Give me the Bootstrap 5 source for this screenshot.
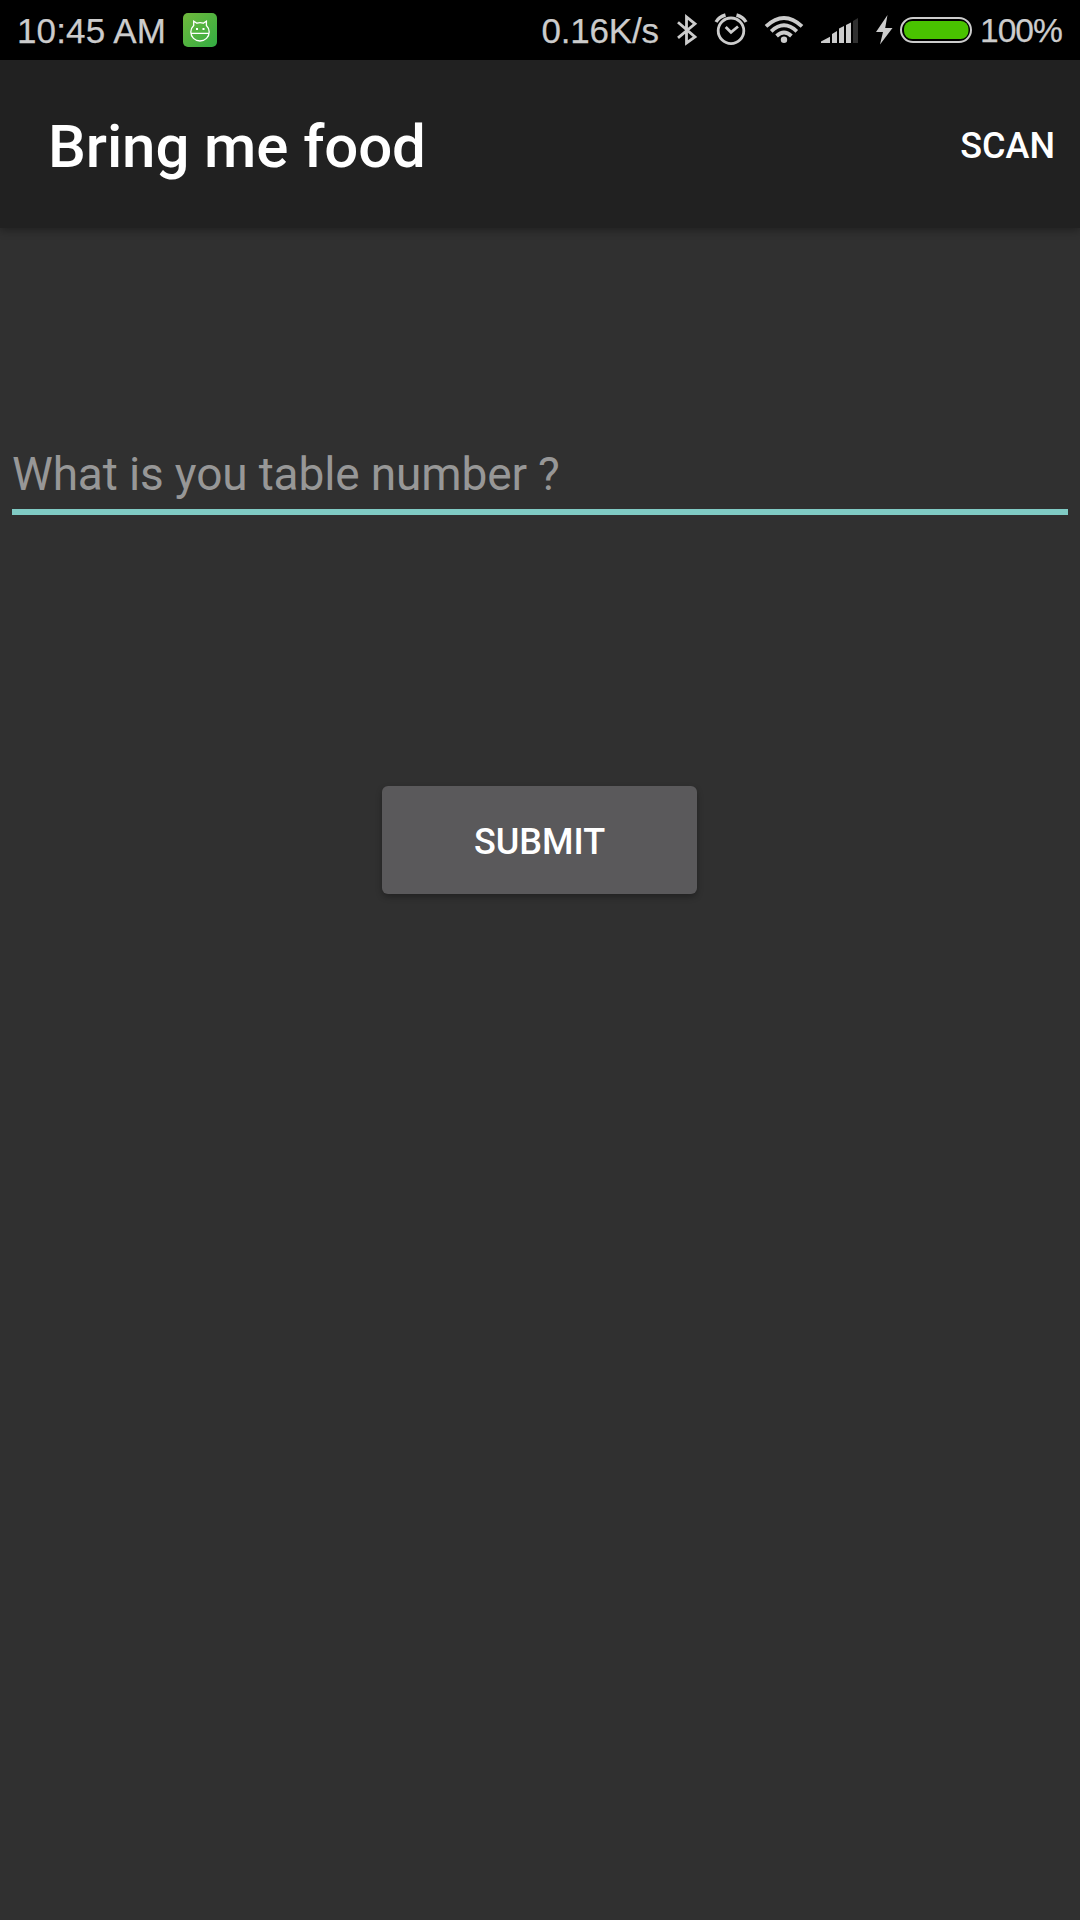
<!DOCTYPE html>
<html lang="en">
<head>
<meta charset="utf-8">
<meta name="viewport" content="width=device-width, initial-scale=1">
<title>Bring me food</title>
<link href="https://cdn.jsdelivr.net/npm/bootstrap@5.3.0/dist/css/bootstrap.min.css" rel="stylesheet">
<style>
  body { background: #303030; font-family: Roboto, sans-serif; min-height: 1920px; }
  .status-bar { height: 60px; background: #000; color: #ccc; font-family: "Liberation Sans", Arial, sans-serif; font-size: 35px; line-height: 60px; padding: 0 18px 0 17px; white-space: nowrap; -webkit-text-stroke: .25px #ccc; }
  .status-bar svg { display: block; flex: none; }
  .clock { width: 166px; letter-spacing: .15px; padding-top: 1px; }
  .speed { width: 134.5px; letter-spacing: -.2px; padding-top: 1px; }
  .charge { width: 82px; font-size: 33.6px; letter-spacing: -1px; padding-top: 1px; }
  .app-bar { height: 168px; padding: 0 25px 0 48px; background: #212121; box-shadow: 0 3px 8px rgba(0,0,0,.3); }
  .app-title { font-size: 60px; font-weight: 500; line-height: 70px; letter-spacing: -.1px; color: #fff; padding-top: 6px; }
  .bar-action { font-size: 36px; font-weight: 500; line-height: 42px; color: #fff; padding-top: 4px; }
  .entry-form { padding: 215px 12px 0; }
  .table-input, .table-input:focus { height: 72px; padding: 0 0 4px; border: 0; border-bottom: 6px solid #80cbc4; border-radius: 0; background: transparent; color: #fff; font-size: 46px; letter-spacing: -.14px; line-height: 56px; box-shadow: none; }
  .table-input::placeholder { color: #979797; opacity: 1; }
  .submit-btn { width: 315px; height: 108px; margin: 271px 1px 0 0; padding: 4px 0 0; border: 0; border-radius: 6px; background: #5a595b; color: #fff; font-size: 36px; font-weight: 500; line-height: 42px; box-shadow: 0 3px 6px rgba(0,0,0,.3); }
</style>
</head>
<body>
<header>
  <div class="status-bar d-flex align-items-center justify-content-between">
    <div class="d-flex align-items-center">
      <span class="clock">10:45 AM</span>
      <svg width="34" height="60" viewBox="183 0 34 60" fill="none">
        <defs><linearGradient id="tile" x1="0" y1="0" x2="1" y2="1"><stop stop-color="#70b83c"/><stop offset="1" stop-color="#32ad43"/></linearGradient></defs>
        <rect x="183" y="13" width="34" height="34" rx="5" fill="url(#tile)"/>
        <path d="M193.7 25.5V21.2L197 23.2Q200 21.9 203.2 23.2L206.4 21.2V25.5Q209.2 28.2 209.2 32A9.2 9 0 0 1 190.8 32Q190.8 28.2 193.7 25.5ZM191 33.3H209" stroke="#fff" stroke-width="1.3"/>
        <path d="M196 28h2v2h-2zM202.500 28h2v2h-2z" fill="#fff"/>
      </svg>
    </div>
    <div class="d-flex align-items-center">
      <span class="speed">0.16K/s</span>
      <svg width="304" height="60" viewBox="676 0 304 60" fill="none">
        <g stroke="#ccc" stroke-width="2.8">
          <path d="M678 22.300L695 37L686.500 43V17L695 23.800L678 37.800"/>
          <circle cx="731" cy="30.800" r="12.800"/>
          <path d="M725.700 27L731 32.300L738 26.500" stroke-width="2.8"/>
          <path d="M716 22Q719 16.800 725.500 15M736.500 15Q743 16.800 746 22" stroke-width="3.4"/>
        </g>
        <g stroke="#ccc" stroke-width="3.800">
          <path d="M766 26.300Q784 9.500 802 26.300M771.200 31.300Q784 19.300 796.800 31.300M776.600 36Q784 29 791.400 36"/>
        </g>
        <circle cx="784" cy="39.800" r="3.200" fill="#ccc"/>
        <path d="M821 43V41.500L830 36.800V43ZM832 43V34L837 31V43ZM839 43V28.500L844 26V43ZM846 43V25L851 22.500V43Z" fill="#ccc"/>
        <path d="M853 43V21L858 18V43Z" fill="#303030"/>
        <path d="M887.500 15L876 32H883L880 44.500L892.500 28H885.200Z" fill="#ccc"/>
        <rect x="901" y="18" width="70" height="24" rx="12" stroke="#ccc" stroke-width="2"/>
        <rect x="904" y="21" width="64.5" height="18" rx="8" fill="#49c300"/>
      </svg>
      <span class="charge">100%</span>
    </div>
  </div>
  <nav class="app-bar d-flex align-items-center justify-content-between">
    <span class="app-title">Bring me food</span>
    <a class="bar-action text-decoration-none" href="#">SCAN</a>
  </nav>
</header>
<main class="entry-form">
  <form class="d-flex flex-column align-items-center">
    <input class="form-control table-input" type="text" placeholder="What is you table number ?" aria-label="Table number">
    <button class="btn submit-btn" type="button">SUBMIT</button>
  </form>
</main>
<script src="https://cdn.jsdelivr.net/npm/bootstrap@5.3.0/dist/js/bootstrap.bundle.min.js"></script>
</body>
</html>
